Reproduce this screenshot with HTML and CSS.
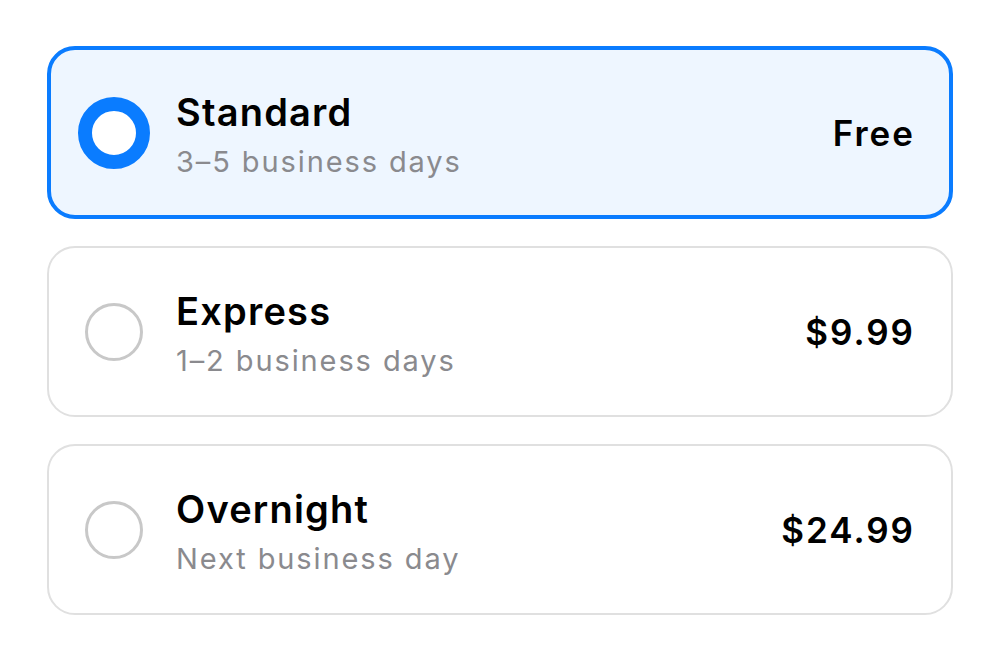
FILE: index.html
```html
<!DOCTYPE html>
<html lang="en">
<head>
<meta charset="utf-8">
<title>Shipping options</title>
<link rel="stylesheet" href="styles.css">
</head>
<body>
<div class="options">
  <div class="option selected">
    <div class="radio-slot"><span class="radio on"></span></div>
    <div class="info">
      <div class="title">Standard</div>
      <div class="sub">3–5 business days</div>
    </div>
    <div class="price">Free</div>
  </div>
  <div class="option">
    <div class="radio-slot"><span class="radio"></span></div>
    <div class="info">
      <div class="title">Express</div>
      <div class="sub">1–2 business days</div>
    </div>
    <div class="price">$9.99</div>
  </div>
  <div class="option">
    <div class="radio-slot"><span class="radio"></span></div>
    <div class="info">
      <div class="title">Overnight</div>
      <div class="sub">Next business day</div>
    </div>
    <div class="price">$24.99</div>
  </div>
</div>
</body>
</html>
```
FILE: styles.css
```css
html, body {
  margin: 0;
  background: #ffffff;
}
body {
  font-family: Inter, "Noto Sans", "Liberation Sans", sans-serif;
  color: #000;
}
.options {
  display: flex;
  flex-direction: column;
  gap: 27px;
  width: 906px;
  padding: 46px 0 0 47px;
}
.option {
  box-sizing: border-box;
  height: 171px;
  display: flex;
  align-items: center;
  border: 2px solid #e0e0e0;
  border-radius: 28px;
  padding: 0 38px 0 29px;
  background: #fff;
}
.option.selected {
  border: 4px solid #0a7cff;
  padding: 0 36px 0 27px;
  background: #eef6ff;
  height: 173px;
}
.radio-slot {
  width: 72px;
  height: 72px;
  display: flex;
  align-items: center;
  justify-content: center;
  flex: none;
}
.radio {
  box-sizing: border-box;
  width: 58px;
  height: 58px;
  border-radius: 50%;
  border: 3px solid #c8c8c8;
}
.radio.on {
  width: 72px;
  height: 72px;
  border: 14px solid #0a7cff;
  background: #fff;
}
.info {
  flex: 1;
  margin-left: 26px;
  margin-top: 12px;
  display: flex;
  flex-direction: column;
}
.title {
  font-size: 38px;
  font-weight: 600;
  line-height: 46px;
  letter-spacing: 1.2px;
}
.sub {
  font-size: 29px;
  line-height: 54px;
  letter-spacing: 1.9px;
  color: #8a8a8e;
}
.price {
  font-size: 35px;
  font-weight: 600;
  letter-spacing: 2px;
  margin-right: -2px;
}
```
